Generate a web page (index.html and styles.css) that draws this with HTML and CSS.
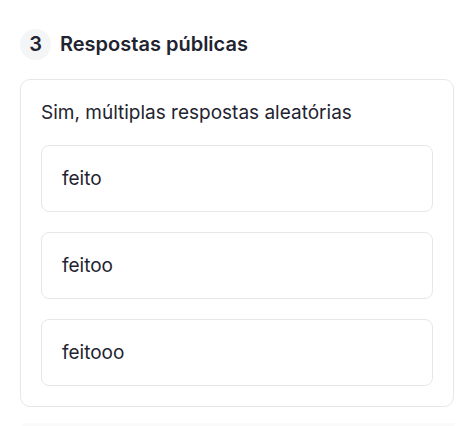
FILE: index.html
```html
<!DOCTYPE html>
<html lang="pt">
<head>
<meta charset="utf-8">
<link rel="stylesheet" href="styles.css">
</head>
<body>
<div class="page">
  <div class="section-head">
    <span class="step">3</span>
    <h2 class="section-title">Respostas públicas</h2>
  </div>
  <div class="card">
    <p class="card-title">Sim, múltiplas respostas aleatórias</p>
    <div class="answers">
      <div class="answer">feito</div>
      <div class="answer">feitoo</div>
      <div class="answer">feitooo</div>
    </div>
  </div>
  <div class="next-block"></div>
</div>
</body>
</html>
```
FILE: styles.css
```css
* { box-sizing: border-box; }
html, body { margin: 0; padding: 0; background: #ffffff; }
body {
  font-family: Inter, "Noto Sans", sans-serif;
  color: #1f2430;
}
.page {
  padding: 29px 5px 0 20px;
}
.section-head {
  display: flex;
  align-items: center;
  gap: 9px;
  height: 30px;
}
.step {
  width: 31px;
  height: 31px;
  border-radius: 50%;
  background: #f4f5f7;
  display: flex;
  align-items: center;
  justify-content: center;
  font-size: 20px;
  font-weight: 600;
  color: #1f2430;
}
.section-title {
  margin: 0;
  font-size: 20px;
  font-weight: 600;
  line-height: 28px;
  color: #1f2430;
}
.card {
  margin-top: 20px;
  border: 1px solid #e6e7ea;
  border-radius: 10px;
  padding: 20px;
}
.card-title {
  margin: 0 0 19px 0;
  font-size: 19px;
  line-height: 26px;
  font-weight: 400;
  color: #1f2430;
}
.answers {
  display: flex;
  flex-direction: column;
  gap: 20px;
}
.answer {
  border: 1px solid #e6e7ea;
  border-radius: 8px;
  padding: 19px 20px;
  font-size: 19px;
  line-height: 27px;
  height: 67px;
  color: #1f2430;
}
.next-block {
  margin-top: 16px;
  margin-left: 2px;
  height: 20px;
  background: #fafafa;
}
```
